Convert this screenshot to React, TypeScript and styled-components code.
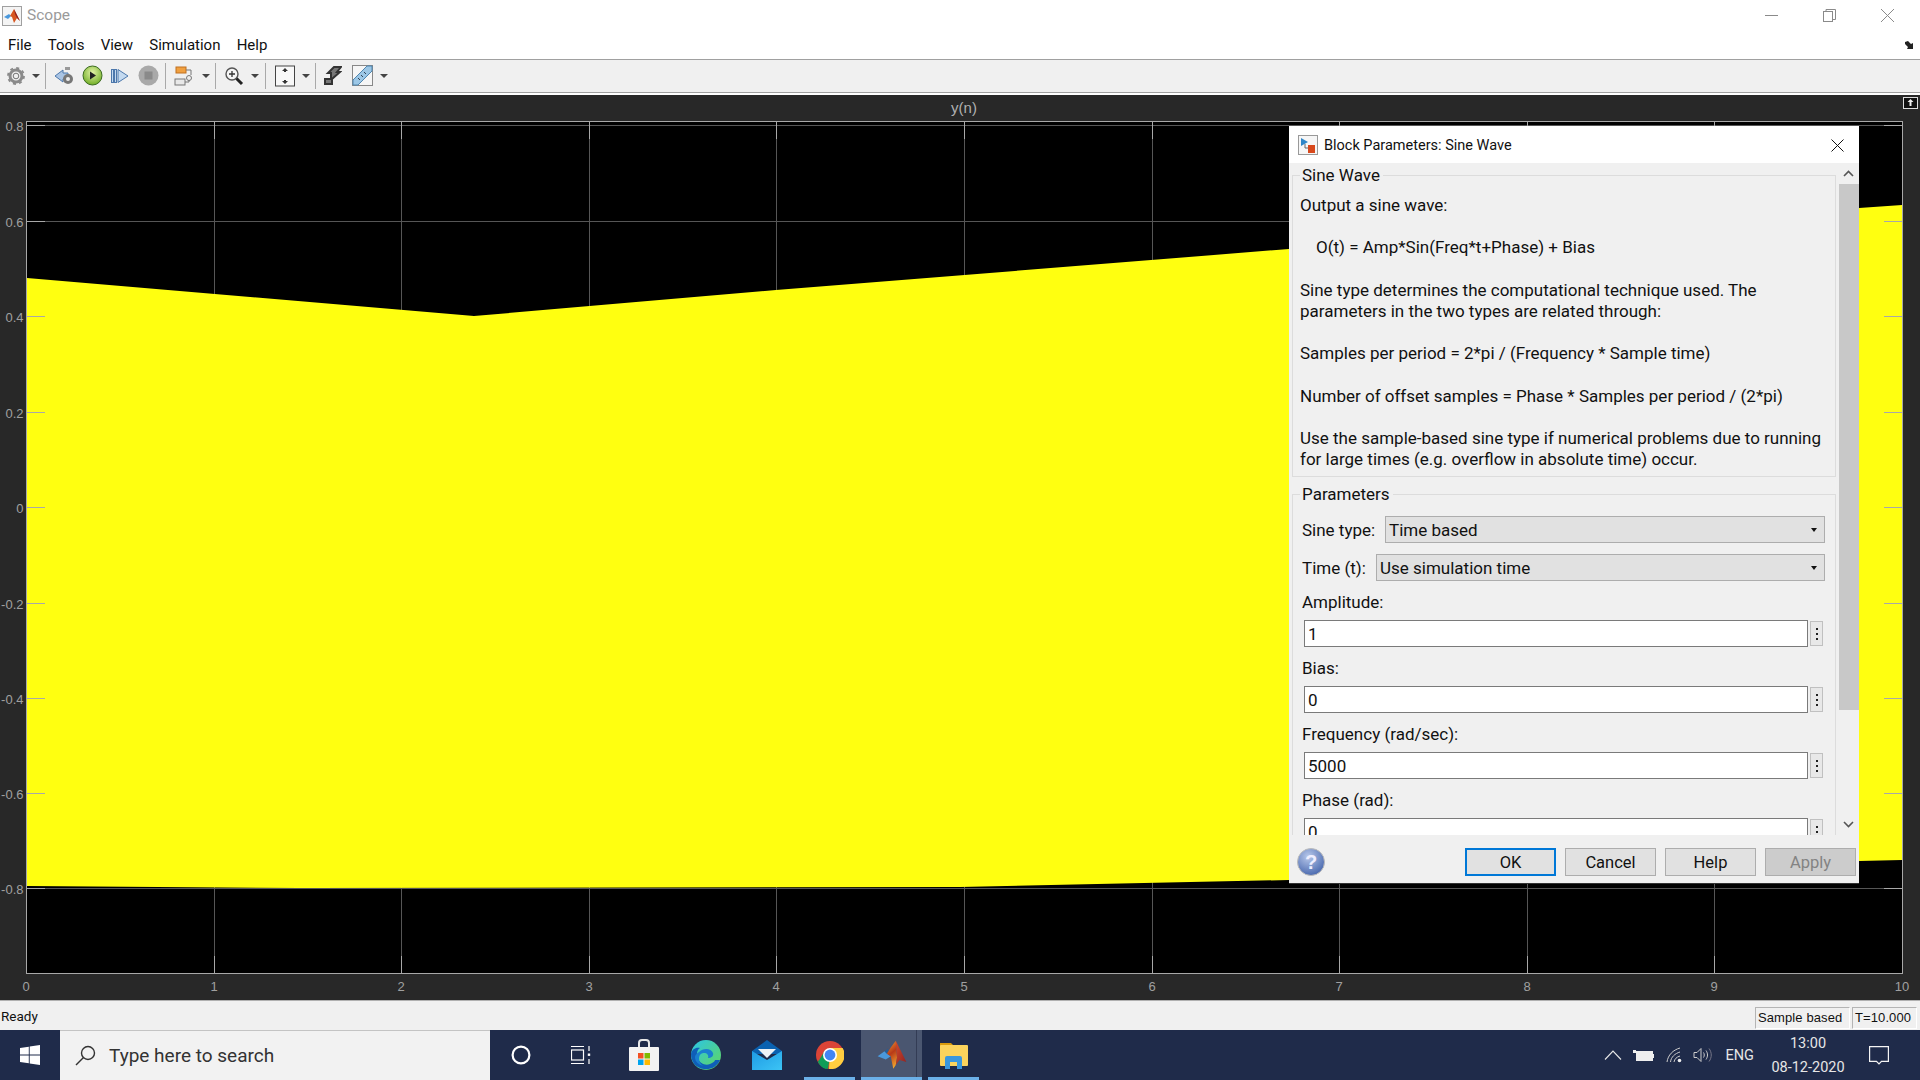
import React from "react";
import styled, { createGlobalStyle } from "styled-components";

const Global = createGlobalStyle`
  html, body { margin: 0; padding: 0; background: #fff; overflow: hidden; }
  * { box-sizing: border-box; }
`;
const ui = `Roboto, "Liberation Sans", sans-serif`;
const Page = styled.div`
  width: 1920px; height: 1080px; display: flex; flex-direction: column; position: relative;
  font-family: ${ui}; color: #111; overflow: hidden; background: #fff;
`;
const TitleBar = styled.div`
  height: 31px; display: flex; align-items: center; padding-left: 2px; background: #fff; flex: none;
`;
const TitleText = styled.span`
  margin-left: 5px; margin-bottom: 2px; font-size: 15.5px; color: #9a9a9a;
`;
const WindowControls = styled.div`
  margin-left: auto; display: flex; align-items: center; padding-right: 26px; gap: 45px; height: 100%;
`;
const MenuBar = styled.div`
  height: 29px; flex: none; display: flex; align-items: center; gap: 16.2px; padding: 0 0 1px 8px;
  background: #fff; border-bottom: 1px solid #a0a0a0; font-size: 15px; position: relative;
`;
const MenuItem = styled.span`color: #111;`;
const CornerIcon = styled.svg`margin-left: auto; margin-right: 6px;`;
const Toolbar = styled.div`
  height: 33px; flex: none; display: flex; align-items: center; background: #f0f0f0;
  border-bottom: 1px solid #a0a0a0; padding-bottom: 1px;
`;
const Tool = styled.span<{ $ml: number }>`
  width: 22px; height: 24px; flex: none; margin-left: ${p => p.$ml}px; display: flex; align-items: center; justify-content: center;
`;
const Caret = styled.span<{ $ml: number }>`
  flex: none; margin-left: ${p => p.$ml}px; width: 0; height: 0; border: 4px solid transparent;
  border-top: 4px solid #444; border-bottom: 0;
`;
const Sep = styled.span<{ $ml: number }>`
  flex: none; margin-left: ${p => p.$ml}px; width: 1px; height: 26px; background: #a9a9a9;
`;
const Gap = styled.div`height: 2px; flex: none; background: #fff;`;
const Scope = styled.div`flex: 1; background: #282828; position: relative; min-height: 0;`;
const ChartSvg = styled.svg`display: block; width: 1920px; height: 905px;`;
const StatusBar = styled.div`
  height: 30px; flex: none; display: flex; align-items: center; background: #f0f0f0; border-top: 1px solid #b0b0b0;
  padding: 0 3px 0 1px; font-size: 13.5px;
`;
const StatusCell = styled.span<{ $w: number; $first?: boolean }>`
  width: ${p => p.$w}px; height: 22px; margin-left: ${p => (p.$first ? "auto" : "2px")}; margin-top: 4px;
  display: flex; align-items: center; padding-left: 2px; font: 13px "Liberation Sans", sans-serif; letter-spacing: 0.1px;
  border: 1px solid #fff; border-top-color: #b4b4b4; border-left-color: #b4b4b4;
`;
const Taskbar = styled.div`
  height: 50px; flex: none; display: flex; align-items: center; background: #1f2b4a; position: relative;
`;
const Start = styled.div`width: 60px; height: 100%; display: flex; align-items: center; justify-content: center; flex: none;`;
const SearchBox = styled.div`
  width: 430px; height: 100%; flex: none; display: flex; align-items: center; gap: 13px; padding-left: 15px;
  background: #f2f2f2; border-top: 1px solid #c4c4c4; font-size: 19px; color: #333;
`;
const TaskIcon = styled.div<{ $w?: number; $ml?: number; $state?: "open" | "active" }>`
  width: ${p => p.$w ?? 62}px; height: 100%; flex: none; display: flex; align-items: center; justify-content: center;
  position: relative; margin-left: ${p => p.$ml ?? 0}px;
  background: ${p => (p.$state === "active" ? "#4a5670" : "transparent")};
  border-bottom: ${p => (p.$state ? "3px solid #6bb0e8" : "0")};
  padding-top: ${p => (p.$state ? "3px" : "0")};
`;
const Divider = styled.span`position: absolute; right: 5px; top: 0; bottom: 0; width: 1px; background: #333c55;`;
const Tray = styled.div`
  margin-left: auto; display: flex; align-items: center; height: 100%; color: #f0f0f0; padding-right: 31px; flex: none;
`;
const TrayIcon = styled.span<{ $ml: number }>`margin-left: ${p => p.$ml}px; display: flex; align-items: center;`;
const Lang = styled.span`margin-left: 13px; font-size: 14.5px; color: #e6e6e6;`;
const Clock = styled.div`
  margin-left: 16px; width: 76px; text-align: center; font-size: 14.5px; line-height: 24px; color: #e6e6e6; padding-top: 1px;
`;
const Dialog = styled.div`
  position: absolute; left: 1289px; top: 126px; width: 570px; height: 757px; background: #f0f0f0;
  display: flex; flex-direction: column; box-shadow: 0 1px 0 #333; font-size: 17px;
`;
const DialogHead = styled.div`
  height: 37px; flex: none; background: #fff; display: flex; align-items: center; padding: 1px 15px 0 9px;
  font-size: 14.5px; color: #111;
`;
const DialogTitle = styled.span`margin-left: 6px;`;
const CloseBtn = styled.svg`margin-left: auto;`;
const DialogBody = styled.div`flex: 1; display: flex; min-height: 0;`;
const Pane = styled.div`flex: 1; overflow: hidden; padding: 2px 2px 0 3px; min-width: 0;`;
const Group = styled.fieldset<{ $top?: number }>`
  margin: ${p => p.$top ?? 0}px 0 0; padding: 0; border: 1px solid #dcdcdc; min-width: 0;
`;
const Legend = styled.legend`
  margin-left: 7px; padding: 0 3px 0 2px; line-height: 21px; height: 21px;
`;
const Description = styled.div`padding: 9px 8px 6px 7px;`;
const Line = styled.p<{ $indent?: boolean; $blank?: boolean }>`
  margin: 0; line-height: 21.2px; height: 21.2px; padding-left: ${p => (p.$indent ? 16 : 0)}px; white-space: nowrap;
  margin-bottom: ${p => (p.$blank ? "21.2px" : "0")};
`;
const Params = styled.div`padding: 11px 10px 0 9px;`;
const ComboRow = styled.div`display: flex; align-items: center; height: 27px; margin-bottom: 11px;`;
const ComboLabel = styled.span<{ $w: number }>`width: ${p => p.$w}px; flex: none; white-space: nowrap;`;
const Combo = styled.div`
  flex: 1; height: 27px; background: #e1e1e1; border: 1px solid #adadad; display: flex; align-items: center; padding: 0 5px 0 3px;
`;
const ComboArrow = styled.span`
  margin-left: auto; margin-right: 2px; width: 0; height: 0; border: 3.5px solid transparent; border-top: 4px solid #111; border-bottom: 0;
`;
const FieldLabel = styled.div`line-height: 21px; height: 21px; margin-bottom: 7px;`;
const FieldRow = styled.div`display: flex; height: 27px; margin-bottom: 11px; padding-left: 2px; align-items: center;`;
const Input = styled.div`
  width: 504px; height: 27px; background: #fff; border: 1px solid #7a7a7a; display: flex; align-items: center; padding-left: 3px; flex: none;
`;
const DotBtn = styled.div`
  width: 13px; height: 25px; margin-left: 2px; flex: none; background: #e8e8e8; border: 1px solid #c0c0c0;
  display: flex; flex-direction: column; align-items: center; justify-content: center; gap: 3px;
`;
const Dot = styled.i`width: 2px; height: 2px; background: #222; display: block;`;
const Scrollbar = styled.div`width: 21px; flex: none; display: flex; flex-direction: column; align-items: center; background: #f0f0f0;`;
const ScrollBtn = styled.svg<{ $h: number }>`height: ${p => p.$h}px; width: 21px; flex: none;`;
const Thumb = styled.div`width: 20px; height: 526px; background: #c8c8c8; flex: none;`;
const ScrollRest = styled.div`flex: 1;`;
const Footer = styled.div`height: 48px; flex: none; display: flex; align-items: flex-start; padding: 13px 3px 0 8px; gap: 9px;`;
const HelpIcon = styled.svg`margin-right: auto;`;
const Btn = styled.div<{ $kind?: "default" | "disabled" }>`
  width: 91px; height: 28px; display: flex; align-items: center; justify-content: center; font-size: 16.5px;
  background: ${p => (p.$kind === "disabled" ? "#cccccc" : "#e1e1e1")};
  color: ${p => (p.$kind === "disabled" ? "#838383" : "#111")};
  border: ${p => (p.$kind === "default" ? "2px solid #0078d7" : "1px solid #adadad")};
`;

const MatlabIcon = ({ size }: { size: number }) => (
  <svg width={size} height={size} viewBox="0 0 24 24">
    <defs>
      <linearGradient id="mlA" x1="0.3" y1="0" x2="0.6" y2="1">
        <stop offset="0" stopColor="#f0902c" /><stop offset="0.45" stopColor="#b83a18" /><stop offset="1" stopColor="#f4a82c" />
      </linearGradient>
      <linearGradient id="mlB" x1="0" y1="0" x2="1" y2="1">
        <stop offset="0" stopColor="#d84a2a" /><stop offset="1" stopColor="#8c2222" />
      </linearGradient>
    </defs>
    <polygon points="0.5,13 6,9 8,11 11,13 7,15.5" fill="#4a98dc" />
    <polygon points="6,9 9,7 8,11" fill="#1f5f9e" />
    <polygon points="15,0.5 11,6 8,11 11,13 13,23 15,20 16,14" fill="url(#mlA)" />
    <polygon points="15,0.5 16,14 15,20 18,16 23.5,17.5" fill="url(#mlB)" />
  </svg>
);

const xs = Array.from({ length: 11 }, (_, i) => Math.round(26 + i * 187.6) + 0.5);
const ys = [["0.8", 125], ["0.6", 221], ["0.4", 316], ["0.2", 412], ["0", 507], ["-0.2", 603], ["-0.4", 698], ["-0.6", 793], ["-0.8", 888]] as [string, number][];

const Chart = () => (
  <ChartSvg viewBox="0 95 1920 905">
    <rect x="26.5" y="121.5" width="1876" height="851.5" fill="#000" />
    <g stroke="#565656" shapeRendering="crispEdges" fill="none">
      {xs.map(x => <line key={x} x1={x} x2={x} y1={122} y2={973} />)}
      {ys.map(([l, y]) => <line key={l} x1={27} x2={1902} y1={y + 0.5} y2={y + 0.5} />)}
    </g>
    <polygon
      points="27,278 474,316 776,290 1289,249 1859,208 1902,205 1902,860 1859,861 1289,880 960,887 300,888 27,886"
      fill="#ffff10"
    />
    <g stroke="#a8a8a8" shapeRendering="crispEdges" fill="none">
      <rect x="26.5" y="121.5" width="1876" height="851.5" />
      {xs.map(x => <React.Fragment key={x}><line x1={x} x2={x} y1={122} y2={139} /><line x1={x} x2={x} y1={956} y2={973} /></React.Fragment>)}
      {ys.map(([l, y]) => <React.Fragment key={l}><line x1={27} x2={45} y1={y + 0.5} y2={y + 0.5} /><line x1={1884} x2={1902} y1={y + 0.5} y2={y + 0.5} /></React.Fragment>)}
    </g>
    <g fill="#a0a0a0" fontFamily="Liberation Sans, sans-serif" fontSize="13">
      {ys.map(([l, y]) => <text key={l} x="23.5" y={y + 6} textAnchor="end">{l}</text>)}
      {xs.map((x, i) => <text key={x} x={x - 0.5} y={991} textAnchor="middle">{i}</text>)}
      <text x="964" y="113" textAnchor="middle" fontSize="15" fill="#b0b0b0">y(n)</text>
    </g>
    <rect x="1903.5" y="97.5" width="14" height="11" fill="#111" stroke="#ddd" />
    <path d="M1910.5 99l3 3h-2v4h-2v-4h-2z" fill="#eee" />
  </ChartSvg>
);

const Field = ({ label, value }: { label: string; value: string }) => (
  <>
    <FieldLabel>{label}</FieldLabel>
    <FieldRow>
      <Input>{value}</Input>
      <DotBtn><Dot /><Dot /><Dot /></DotBtn>
    </FieldRow>
  </>
);

export default function App() {
  return (
    <Page>
      <Global />
      <TitleBar>
        <svg width="20" height="20" viewBox="0 0 20 20">
          <rect x="0.5" y="0.5" width="19" height="19" fill="#f4f4f4" stroke="#a0a0a0" />
          <polygon points="2,11 7,8 9,10 6,13" fill="#4a98dc" />
          <polygon points="12,3 8,10 10,11 12,17 15,12 18,15" fill="#d8561f" />
          <polygon points="12,3 18,15 15,12 13,8" fill="#8e2020" />
        </svg>
        <TitleText>Scope</TitleText>
        <WindowControls>
          <svg width="13" height="13" viewBox="0 0 13 13"><line x1="0" x2="13" y1="6.5" y2="6.5" stroke="#8a8a8a" /></svg>
          <svg width="13" height="13" viewBox="0 0 13 13" fill="none" stroke="#8a8a8a"><rect x="0.5" y="2.5" width="9" height="10" /><path d="M3 2.5v-2h9.5v10h-3" /></svg>
          <svg width="13" height="13" viewBox="0 0 13 13" stroke="#8a8a8a"><line x1="0" y1="0" x2="13" y2="13" /><line x1="13" y1="0" x2="0" y2="13" /></svg>
        </WindowControls>
      </TitleBar>
      <MenuBar>
        {["File", "Tools", "View", "Simulation", "Help"].map(m => <MenuItem key={m}>{m}</MenuItem>)}
        <CornerIcon width="9" height="8" viewBox="0 0 9 8"><path d="M0 1l3-1 3 3 2-1v6H2l1-2L0 3z" fill="#222" /></CornerIcon>
      </MenuBar>
      <Toolbar>
        <Tool $ml={5}>
          <svg width="20" height="20" viewBox="0 0 20 20"><circle cx="10" cy="10" r="6" fill="none" stroke="#8a8a8a" strokeWidth="3" /><circle cx="10" cy="10" r="8" fill="none" stroke="#8a8a8a" strokeWidth="1.8" strokeDasharray="3 3.28" /><circle cx="10" cy="10" r="2.8" fill="#eee" stroke="#555" strokeWidth="0.8" /></svg>
        </Tool>
        <Caret $ml={5} />
        <Sep $ml={5} />
        <Tool $ml={8}>
          <svg width="22" height="22" viewBox="0 0 22 22"><path d="M1 11l8-6v3h5v6H9v3z" fill="#a9c4e4" stroke="#4d78ac" /><path d="M11 2h5v3h-5z" fill="#999" /><circle cx="14" cy="14" r="5" fill="#777" /><circle cx="14" cy="14" r="2" fill="#eee" /></svg>
        </Tool>
        <Tool $ml={5}>
          <svg width="21" height="21" viewBox="0 0 21 21"><defs><radialGradient id="pl" cx="0.5" cy="0.35" r="0.7"><stop offset="0" stopColor="#e4f4a8" /><stop offset="1" stopColor="#68a81c" /></radialGradient></defs><circle cx="10.5" cy="10.5" r="9.5" fill="url(#pl)" stroke="#3b6b20" /><path d="M8 6.5l6 4-6 4z" fill="#222" /></svg>
        </Tool>
        <Tool $ml={6}>
          <svg width="18" height="18" viewBox="0 0 18 18" fill="#c4daf0" stroke="#4d78ac"><rect x="0.5" y="2.5" width="2" height="13" /><rect x="3.5" y="2.5" width="2" height="13" /><path d="M7 2.5l10 6.5-10 6.5z" /></svg>
        </Tool>
        <Tool $ml={6}>
          <svg width="21" height="21" viewBox="0 0 21 21"><circle cx="10.5" cy="10.5" r="10" fill="#a9a9a9" /><rect x="6.5" y="6.5" width="8" height="8" fill="#8a8a8a" /></svg>
        </Tool>
        <Sep $ml={6} />
        <Tool $ml={6}>
          <svg width="22" height="22" viewBox="0 0 22 22" fill="none" stroke="#777"><rect x="4" y="2" width="10" height="6" fill="#f0a040" stroke="#c07020" /><rect x="3" y="14" width="10" height="6" fill="#e8e8e8" /><circle cx="17" cy="13" r="2.5" fill="#eee" /><path d="M14 5h5v5M13 17h4v-2" /></svg>
        </Tool>
        <Caret $ml={8} />
        <Sep $ml={5} />
        <Tool $ml={7}>
          <svg width="20" height="20" viewBox="0 0 20 20" fill="none"><circle cx="8" cy="8" r="6" fill="#f6f6f6" stroke="#555" strokeWidth="1.4" /><path d="M5 8h6M8 5v6" stroke="#333" strokeWidth="1.3" /><path d="M12.5 12.5l5.5 5.5" stroke="#222" strokeWidth="3" /></svg>
        </Tool>
        <Caret $ml={6} />
        <Sep $ml={6} />
        <Tool $ml={8}>
          <svg width="20" height="22" viewBox="0 0 20 22"><rect x="0.5" y="1" width="19" height="20" fill="#f8f8f8" stroke="#444" /><path d="M10 3l3 3h-2v1H9V6H7zM10 19l3-3h-2v-1H9v1H7z" fill="#333" /></svg>
        </Tool>
        <Caret $ml={6} />
        <Sep $ml={5} />
        <Tool $ml={6}>
          <svg width="18" height="20" viewBox="0 0 18 20" fill="none" stroke="#333" strokeWidth="2"><path d="M1 18V13H7V7H4L10 1H17L13 6H16L8 13V18Z" fill="#777" /></svg>
        </Tool>
        <Tool $ml={7}>
          <svg width="21" height="21" viewBox="0 0 21 21"><rect x="0.5" y="0.5" width="20" height="20" fill="#f6f6f6" stroke="#888" /><path d="M1 15L15 1h5v5L6 20H1z" fill="#9cc7e6" stroke="#4f86b0" /><path d="M6 13l2 2M9 10l2 2M12 7l2 2" stroke="#345" /></svg>
        </Tool>
        <Caret $ml={7} />
      </Toolbar>
      <Gap />
      <Scope>
        <Chart />
      </Scope>
      <StatusBar>
        <span>Ready</span>
        <StatusCell $first $w={95}>Sample based</StatusCell>
        <StatusCell $w={65}>T=10.000</StatusCell>
      </StatusBar>
      <Taskbar>
        <Start>
          <svg width="20" height="20" viewBox="0 0 20 20" fill="#fff"><polygon points="0,3 8.8,1.7 8.8,9.5 0,9.5" /><polygon points="9.7,1.5 20,0 20,9.5 9.7,9.5" /><polygon points="0,10.4 8.8,10.4 8.8,18.3 0,17" /><polygon points="9.7,10.4 20,10.4 20,20 9.7,18.5" /></svg>
        </Start>
        <SearchBox>
          <svg width="21" height="21" viewBox="0 0 21 21" fill="none" stroke="#333" strokeWidth="1.4"><circle cx="13" cy="8" r="6.5" /><line x1="8.5" y1="12.5" x2="1" y2="20" /></svg>
          <span>Type here to search</span>
        </SearchBox>
        <TaskIcon $w={61}>
          <svg width="20" height="20" viewBox="0 0 20 20" fill="none" stroke="#fff" strokeWidth="2.2"><circle cx="10" cy="10" r="8.4" /></svg>
        </TaskIcon>
        <TaskIcon $w={60}>
          <svg width="20" height="20" viewBox="0 0 20 20" fill="none" stroke="#fff" strokeWidth="1.2"><path d="M0 1.5h13M0 18.5h13" /><rect x="0.5" y="5" width="12" height="10" /><path d="M18 1v5M18 14v5" /><rect x="16.8" y="8.5" width="2.4" height="2.4" fill="#fff" stroke="none" /></svg>
        </TaskIcon>
        <TaskIcon $w={65}>
          <svg width="30" height="32" viewBox="0 0 30 32"><path d="M10 8V4a3 3 0 0 1 3-3h4a3 3 0 0 1 3 3v4" fill="none" stroke="#e8e8e8" strokeWidth="2" /><rect x="0" y="8" width="30" height="24" rx="1" fill="#f3f3f3" /><rect x="9" y="14" width="5.5" height="5.5" fill="#f25022" /><rect x="15.5" y="14" width="5.5" height="5.5" fill="#7fba00" /><rect x="9" y="20.5" width="5.5" height="5.5" fill="#00a4ef" /><rect x="15.5" y="20.5" width="5.5" height="5.5" fill="#ffb900" /></svg>
        </TaskIcon>
        <TaskIcon $w={60}>
          <svg width="30" height="30" viewBox="0 0 30 30"><defs><linearGradient id="ed" x1="0" y1="0" x2="1" y2="1"><stop offset="0" stopColor="#2bc4e8" /><stop offset="1" stopColor="#62d85c" /></linearGradient></defs><circle cx="15" cy="15" r="15" fill="url(#ed)" /><path d="M29 20c-3 7-10 10-16 9C5 28 0 22 0 14 1 9 5 7 9 8c-3 2-4 6-2 11 2 4 7 7 12 5 3-1 5-3 5-4z" fill="#0f5fb8" /><path d="M8 12c4-4 12-4 14 1 1 3-2 5-5 5 1-3-1-5-4-5-3 0-5 2-5 6 0 3 2 6 5 7-5-1-9-4-9-9 0-2 2-4 4-5z" fill="#1a7fd0" /></svg>
        </TaskIcon>
        <TaskIcon $w={62}>
          <svg width="30" height="30" viewBox="0 0 30 30"><polygon points="15,0 30,11 30,14 0,14 0,11" fill="#0b62b0" /><polygon points="6,9 24,9 15,18" fill="#eef2f5" /><defs><linearGradient id="ma" x1="0" y1="0" x2="1" y2="1"><stop offset="0" stopColor="#1f9be4" /><stop offset="1" stopColor="#3cc4f5" /></linearGradient></defs><polygon points="0,11 15,20 30,11 30,30 0,30" fill="url(#ma)" /></svg>
        </TaskIcon>
        <TaskIcon $w={51} $ml={6} $state="open">
          <svg width="28" height="28" viewBox="0 0 28 28"><circle cx="14" cy="14" r="14" fill="#db4437" /><path d="M14 14L2 20a14 14 0 0 0 10 8z" fill="#0f9d58" /><path d="M14 7h12.6A14 14 0 0 1 13 28z" fill="#ffcd40" /><path d="M2 21L8.5 10 14 19 10 28C6 27 3.5 24 2 21z" fill="#0f9d58" /><circle cx="14" cy="14" r="7" fill="#fff" /><circle cx="14" cy="14" r="5.4" fill="#4285f4" /></svg>
        </TaskIcon>
        <TaskIcon $w={61} $ml={6} $state="active">
          <MatlabIcon size={30} />
          <Divider />
        </TaskIcon>
        <TaskIcon $w={51} $ml={6} $state="open">
          <svg width="28" height="28" viewBox="0 0 28 28"><path d="M0 2h11l2 2h2v5H0z" fill="#d99a0c" /><rect x="0" y="4" width="28" height="21" rx="1" fill="#fbd35c" /><path d="M5 28V17a2 2 0 0 1 2-2h13a2 2 0 0 1 2 2v11h-5v-7h-7v7z" fill="#3a97dd" /></svg>
        </TaskIcon>
        <Tray>
          <svg width="18" height="10" viewBox="0 0 18 10" fill="none" stroke="#e8e8e8" strokeWidth="1.1"><path d="M1 9.5L9 1l8 8.5" /></svg>
          <TrayIcon $ml={11}>
            <svg width="21" height="12" viewBox="0 0 21 12"><rect x="3.5" y="2.5" width="16" height="9" fill="#eee" stroke="#eee" /><rect x="19.5" y="5" width="1.5" height="4" fill="#eee" /><path d="M0 1h3v3H0z" fill="#eee" /></svg>
          </TrayIcon>
          <TrayIcon $ml={12}>
            <svg width="16" height="16" viewBox="0 0 16 16" fill="none" stroke="#ccc"><path d="M1 15C2 8 7 3 14 1M4.5 15C5 10 9 6.5 14 5M8 15c.5-3 2.5-5 6-6" /><circle cx="13.5" cy="13.5" r="1.8" fill="#eee" stroke="none" /></svg>
          </TrayIcon>
          <TrayIcon $ml={11}>
            <svg width="20" height="16" viewBox="0 0 20 16" fill="none" stroke="#ccc"><path d="M1 5.5h3L8 1.5v13L4 10.5H1z" /><path d="M10.5 5.5c1 1.5 1 3.5 0 5M13 3.5c2 3 2 6 0 9" /><path d="M16 1.5c3 4 3 9 0 13" stroke="#778" /></svg>
          </TrayIcon>
          <Lang>ENG</Lang>
          <Clock>13:00<br />08-12-2020</Clock>
          <TrayIcon $ml={23}>
            <svg width="20" height="19" viewBox="0 0 20 19" fill="none" stroke="#f4f4f4" strokeWidth="1.2"><path d="M.6.6h18.8v14.8H12.5L10 18l-2.5-2.6H.6z" /></svg>
          </TrayIcon>
        </Tray>
      </Taskbar>
      <Dialog>
        <DialogHead>
          <svg width="20" height="20" viewBox="0 0 20 20"><rect x="0.5" y="0.5" width="19" height="19" fill="#f6f6f6" stroke="#999" /><path d="M3 3l7 4-7 4z" fill="#2e86c8" /><rect x="10" y="10" width="7" height="8" fill="#d8481c" /><path d="M7 9v4h3" stroke="#666" fill="none" /></svg>
          <DialogTitle>Block Parameters: Sine Wave</DialogTitle>
          <CloseBtn width="13" height="13" viewBox="0 0 13 13" stroke="#111"><line x1="0.5" y1="0.5" x2="12.5" y2="12.5" /><line x1="12.5" y1="0.5" x2="0.5" y2="12.5" /></CloseBtn>
        </DialogHead>
        <DialogBody>
          <Pane>
            <Group>
              <Legend>Sine Wave</Legend>
              <Description>
                <Line $blank>Output a sine wave:</Line>
                <Line $indent $blank>O(t) = Amp*Sin(Freq*t+Phase) + Bias</Line>
                <Line>Sine type determines the computational technique used. The</Line>
                <Line $blank>parameters in the two types are related through:</Line>
                <Line $blank>Samples per period = 2*pi / (Frequency * Sample time)</Line>
                <Line $blank>Number of offset samples = Phase * Samples per period / (2*pi)</Line>
                <Line>Use the sample-based sine type if numerical problems due to running</Line>
                <Line>for large times (e.g. overflow in absolute time) occur.</Line>
              </Description>
            </Group>
            <Group $top={7}>
              <Legend>Parameters</Legend>
              <Params>
                <ComboRow>
                  <ComboLabel $w={83}>Sine type:</ComboLabel>
                  <Combo>Time based<ComboArrow /></Combo>
                </ComboRow>
                <ComboRow>
                  <ComboLabel $w={74}>Time (t):</ComboLabel>
                  <Combo>Use simulation time<ComboArrow /></Combo>
                </ComboRow>
                <Field label="Amplitude:" value="1" />
                <Field label="Bias:" value="0" />
                <Field label="Frequency (rad/sec):" value="5000" />
                <Field label="Phase (rad):" value="0" />
              </Params>
            </Group>
          </Pane>
          <Scrollbar>
            <ScrollBtn $h={21} viewBox="0 0 21 21" fill="none" stroke="#555" strokeWidth="1.6"><path d="M6 13l4.5-4.5L15 13" /></ScrollBtn>
            <Thumb />
            <ScrollRest />
            <ScrollBtn $h={21} viewBox="0 0 21 21" fill="none" stroke="#555" strokeWidth="1.6"><path d="M6 8l4.5 4.5L15 8" /></ScrollBtn>
          </Scrollbar>
        </DialogBody>
        <Footer>
          <HelpIcon width="28" height="28" viewBox="0 0 28 28">
            <defs><radialGradient id="hp" cx="0.4" cy="0.3" r="0.8"><stop offset="0" stopColor="#b8c8ea" /><stop offset="1" stopColor="#3d5ea8" /></radialGradient></defs>
            <circle cx="14" cy="14" r="13.5" fill="url(#hp)" stroke="#bbb" />
            <text x="14" y="21" textAnchor="middle" fontFamily="Liberation Sans, sans-serif" fontWeight="bold" fontSize="20" fill="#eef">?</text>
          </HelpIcon>
          <Btn $kind="default">OK</Btn>
          <Btn>Cancel</Btn>
          <Btn>Help</Btn>
          <Btn $kind="disabled">Apply</Btn>
        </Footer>
      </Dialog>
    </Page>
  );
}
